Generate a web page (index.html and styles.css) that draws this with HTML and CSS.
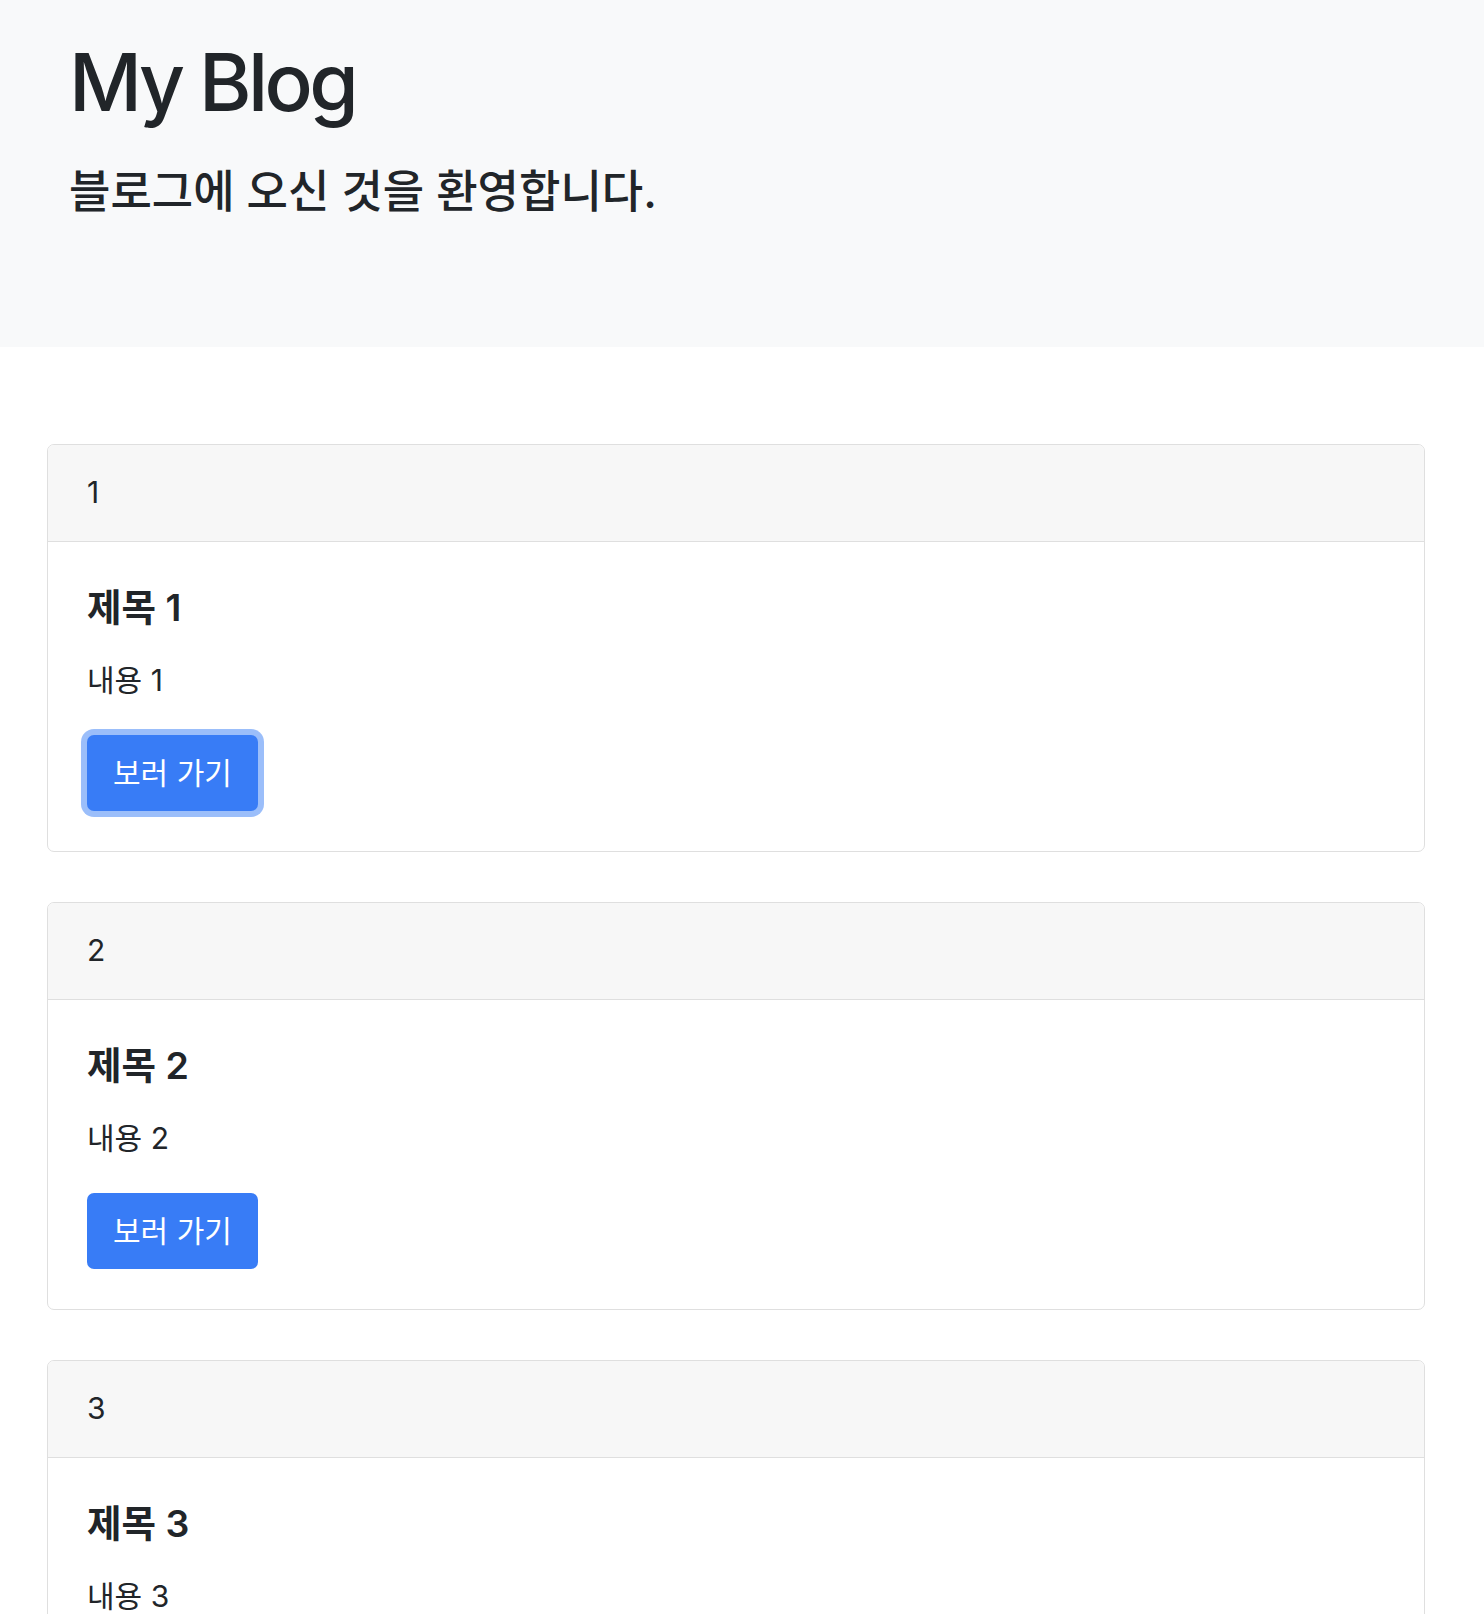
FILE: index.html
```html
<!DOCTYPE html>
<html lang="ko">
<head>
<meta charset="utf-8">
<title>My Blog</title>
<link rel="stylesheet" href="styles.css">
</head>
<body>
<header class="hero">
  <h1 class="hero-title">My Blog</h1>
  <p class="hero-lead">블로그에 오신 것을 환영합니다.</p>
</header>
<main class="container">
  <article class="card">
    <div class="card-header">1</div>
    <div class="card-body">
      <h5 class="card-title">제목 1</h5>
      <p class="card-text">내용 1</p>
      <a href="#" class="btn btn-primary is-focused">보러 가기</a>
    </div>
  </article>
  <article class="card">
    <div class="card-header">2</div>
    <div class="card-body">
      <h5 class="card-title">제목 2</h5>
      <p class="card-text">내용 2</p>
      <a href="#" class="btn btn-primary">보러 가기</a>
    </div>
  </article>
  <article class="card">
    <div class="card-header">3</div>
    <div class="card-body">
      <h5 class="card-title">제목 3</h5>
      <p class="card-text">내용 3</p>
      <a href="#" class="btn btn-primary">보러 가기</a>
    </div>
  </article>
</main>
</body>
</html>
```
FILE: styles.css
```css
* { box-sizing: border-box; }

html, body {
  margin: 0;
  padding: 0;
  background: #ffffff;
  color: #212529;
  font-family: Inter, "Noto Sans CJK KR", sans-serif;
  font-size: 30px;
  line-height: 1.5;
}

.hero {
  background: #f8f9fa;
  height: 347px;
  padding: 34px 40px 0 69px;
}

.hero-title {
  margin: 0;
  font-size: 80px;
  font-weight: 500;
  line-height: 1.2;
  letter-spacing: -3.6px;
}

.hero-lead {
  margin: 28px 0 0;
  font-size: 45px;
  font-weight: 500;
  line-height: 1.5;
}

.container {
  padding: 97px 59px 0 47px;
  display: flex;
  flex-direction: column;
  gap: 50px;
}

.card {
  border: 1px solid #dfdfdf;
  border-radius: 7px;
  background: #fff;
  overflow: hidden;
}

.card-header {
  background: #f7f7f7;
  border-bottom: 1px solid #dfdfdf;
  padding: 25px 39px 26px;
  line-height: 45px;
}

.card-body {
  padding: 43px 39px 40px;
}

.card-title {
  margin: 0 0 28px;
  font-size: 37.5px;
  font-weight: 600;
  line-height: 45px;
}

.card-text {
  margin: 0 0 32px;
  line-height: 45px;
}

.btn {
  display: inline-block;
  text-decoration: none;
  font-size: 30px;
  line-height: 45px;
  padding: 15.5px 26px;
  border-radius: 7px;
}

.btn-primary {
  background: #387cf6;
  color: #ffffff;
}

.btn-primary.is-focused {
  box-shadow: 0 0 0 6px #9bbefa;
}
```
